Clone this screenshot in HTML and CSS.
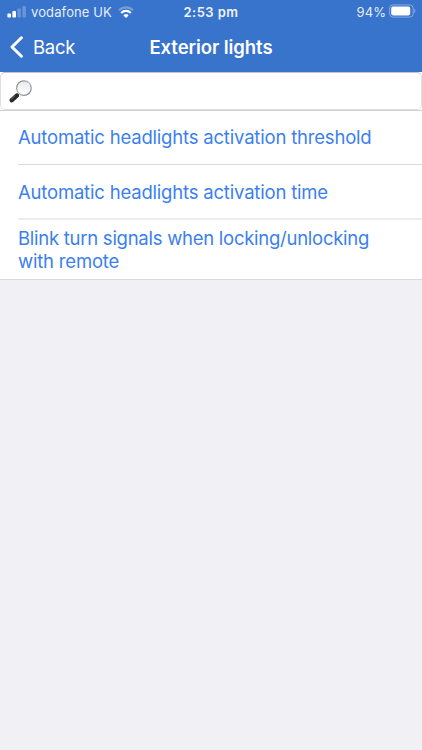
FILE: index.html
```html
<!DOCTYPE html>
<html lang="en">
<head>
<meta charset="utf-8">
<title>Exterior lights</title>
<link rel="stylesheet" href="styles.css">
</head>
<body>
<header class="top">
  <div class="status">
    <div class="carrier">
      <svg class="signal" width="20" height="12" viewBox="0 0 20 12" fill="#fff"><rect x="0.4" y="7.6" width="3.6" height="4" rx=".8"/><rect x="5.4" y="5" width="3.6" height="6.6" rx=".8"/><rect x="10.4" y="2.6" width="3.4" height="9" rx=".8" opacity=".25"/><rect x="15.4" y="0" width="3.4" height="11.6" rx=".8" opacity=".25"/></svg>
      <span class="carrier-name">vodafone UK</span>
      <svg class="wifi" width="16" height="12" viewBox="0 0 16 12" fill="none" stroke="#fff" stroke-width="2.1"><path d="M1 4.2a10 10 0 0 1 14 0" opacity=".3"/><path d="M3.2 6.9a6.8 6.8 0 0 1 9.6 0"/><path d="M8 12 5.4 9.4a3.7 3.7 0 0 1 5.2 0Z" fill="#fff" stroke="none"/></svg>
    </div>
    <span class="clock">2:53 pm</span>
    <div class="power">
      <span class="percent">94%</span>
      <svg class="battery" width="28" height="14" viewBox="0 0 28 14"><rect x=".6" y=".9" width="23.6" height="12.2" rx="3.4" fill="none" stroke="#fff" stroke-opacity=".4"/><rect x="2.2" y="2.6" width="19" height="8.8" rx="1.8" fill="#fff"/><path d="M25.4 4.8q2 2.2 0 4.4Z" fill="#fff" opacity=".45"/></svg>
    </div>
  </div>
  <nav class="nav">
    <a class="back"><svg width="14" height="22" viewBox="0 0 14 22" fill="none" stroke="#fff" stroke-width="3" stroke-linecap="round" stroke-linejoin="round"><path d="M11.4 1.8 2 11l9.4 9.2"/></svg><span>Back</span></a>
    <h1 class="title">Exterior lights</h1>
  </nav>
</header>
<div class="search-bar">
  <div class="search">
    <svg width="26" height="26" viewBox="0 0 26 26">
      <defs>
        <linearGradient id="rim" x1="0" y1="0" x2="1" y2="1"><stop offset="0" stop-color="#777"/><stop offset=".5" stop-color="#b5b8bd"/><stop offset="1" stop-color="#65738b"/></linearGradient>
        <linearGradient id="glass" x1="0" y1="0" x2="0" y2="1"><stop offset="0" stop-color="#e9ebec"/><stop offset="1" stop-color="#fff"/></linearGradient>
      </defs>
      <path d="m9.6 14.8-2 2" stroke="#a0a3a7" stroke-width="2.4"/>
      <path d="m7.8 16.6-5 4.6" stroke="#25282b" stroke-width="4.4" stroke-linecap="round"/>
      <path d="m6.2 16.5-4.1 3.8" stroke="#777c83" stroke-width=".9"/>
      <circle cx="14.9" cy="9.1" r="7.3" fill="url(#glass)" stroke="url(#rim)" stroke-width="1.2"/>
    </svg>
  </div>
</div>
<ul class="list">
  <li class="row"><span>Automatic headlights activation threshold</span></li>
  <li class="row second"><span>Automatic headlights activation time</span></li>
  <li class="row tall"><span class="blink">Blink turn signals when locking/unlocking</span><span>with remote</span></li>
</ul>
</body>
</html>
```
FILE: styles.css
```css
* { box-sizing: border-box; }
body {
  margin: 0;
  height: 750px;
  overflow: hidden;
  background: #f0f0f5;
  font-family: Inter, "Liberation Sans", sans-serif;
}
svg { display: block; flex: none; }
.top { height: 72px; background: #3873cc; color: #fff; }
.status {
  display: grid;
  grid-template-columns: 1fr auto 1fr;
  height: 24px;
  align-items: center;
  padding: 0 5px 0 7px;
  font-size: 13px;
  line-height: 24px;
}
.carrier, .power { display: flex; align-items: center; }
.carrier-name { margin-left: 4px; letter-spacing: .12px; opacity: .88; }
.wifi { margin-left: 6px; }
.clock { margin-right: 2px; font-weight: 600; letter-spacing: .45px; opacity: .92; }
.power { justify-content: flex-end; gap: 3px; }
.percent { letter-spacing: .1px; opacity: .88; }
.battery { margin-bottom: 2px; }
.nav {
  display: grid;
  grid-template-columns: 1fr auto 1fr;
  height: 46px;
  align-items: center;
  padding: 0 10px;
}
.back { display: flex; align-items: center; gap: 9px; font-size: 18.5px; letter-spacing: -.3px; }
.title { margin: 0; font-size: 18.5px; font-weight: 600; letter-spacing: -.07px; }
.search-bar { height: 39px; background: #fff; border-bottom: 1px solid #d2d2d4; }
.search {
  height: 38px;
  padding: 6px 8px;
  border: 1px solid #dededf;
  border-top-color: #c4c4c6;
  border-radius: 5px;
}
.list { margin: 0; padding: 0 0 0 18px; list-style: none; background: #fff; border-bottom: 1px solid #dadadc; }
.row {
  display: flex;
  flex-direction: column;
  justify-content: center;
  height: 54px;
  border-bottom: 1px solid #dadadc;
  color: #3b7ff0;
  font-size: 18.5px;
  line-height: 22.5px;
  letter-spacing: -.19px;
  white-space: nowrap;
}
.second { height: 55px; padding-top: 1px; border-bottom: 2px solid #ececee; }
.tall { height: 59px; border: 0; }
.blink { letter-spacing: -.26px; }
```
